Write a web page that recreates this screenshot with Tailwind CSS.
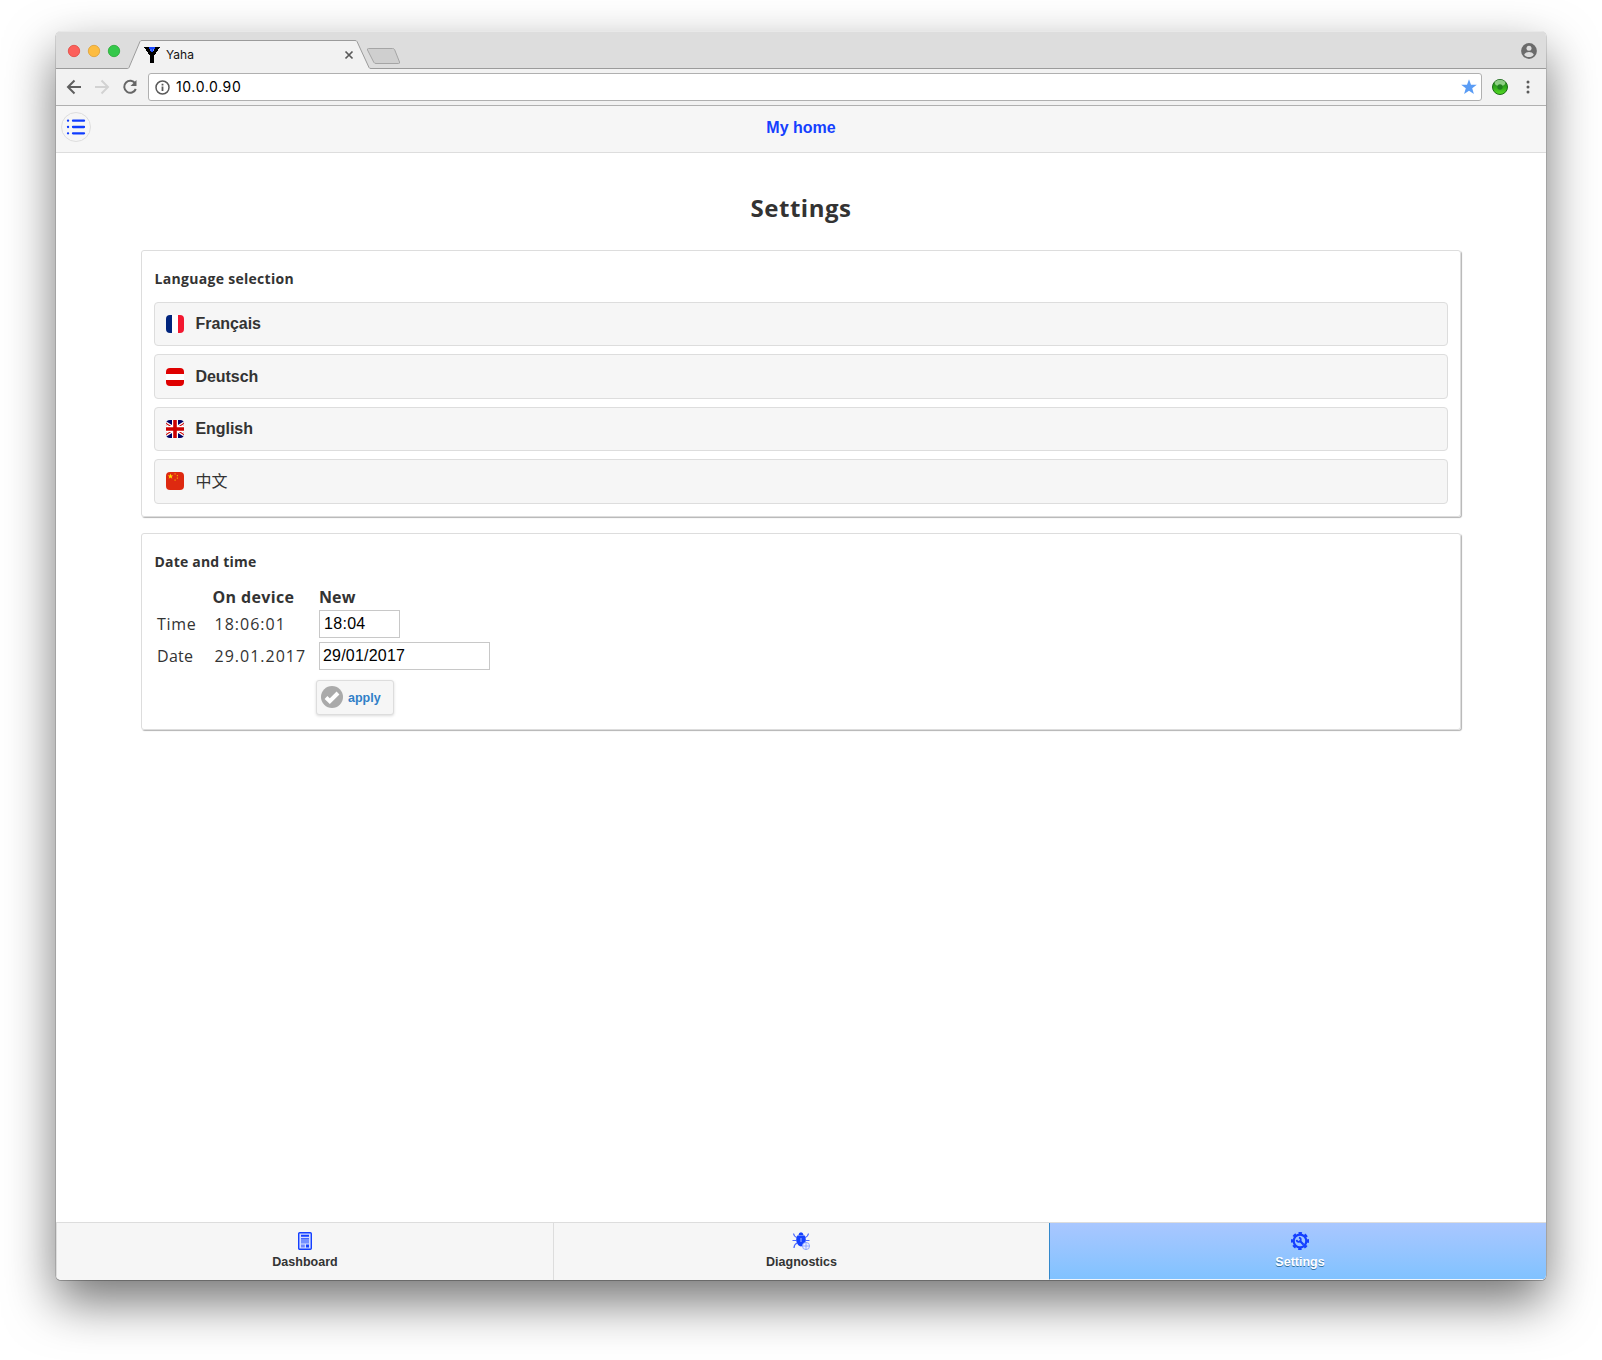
<!DOCTYPE html>
<html lang="en">
<head>
<meta charset="utf-8">
<title>Yaha</title>
<script src="https://cdn.jsdelivr.net/npm/@tailwindcss/browser@4"></script>
</head>
<body class="h-[1360px] w-[1602px] overflow-hidden bg-white pt-[31px] pl-[56px] font-['Liberation_Sans',sans-serif] text-[#333]">
<div class="flex h-[1249px] w-[1490px] flex-col overflow-hidden rounded-[5px] bg-white shadow-[0_0.5px_0_0.5px_rgba(0,0,0,0.25),0_22px_50px_rgba(0,0,0,0.55)]">

  <!-- Tab strip -->
  <div class="relative flex h-[38px] shrink-0 items-start border-t border-[#e8e8e8] bg-[#dddddd]">
    <svg class="h-[37px] w-[1490px]" viewBox="0 0 1490 37" fill="none">
      <circle cx="18" cy="19" r="5.7" fill="#fc605b" stroke="#e2463f" stroke-width=".8"/>
      <circle cx="38" cy="19" r="5.7" fill="#fdbc40" stroke="#dea034" stroke-width=".8"/>
      <circle cx="58" cy="19" r="5.7" fill="#34c84a" stroke="#27a835" stroke-width=".8"/>
      <path d="M71.5 38 84 9.5Q84.500 8.500 86 8.500H299Q300.500 8.500 301 9.500L314 38Z" fill="#f2f2f2"/>
      <path d="M0 36.500H71.500Q72.500 36.500 73 35.500L84 9.500Q84.500 8.500 86 8.500H299Q300.500 8.500 301 9.500L313 35.500Q313.500 36.500 315 36.500H1490" stroke="#9b9b9b"/>
      <path d="M312.500 16.500H336.500Q338 16.500 338.600 17.600L343.500 30Q344 31.500 342.500 31.500H320Q318.500 31.500 317.800 30.300L311.500 18Q311 16.500 312.500 16.500Z" fill="#cfcfcf" stroke="#a5a5a5"/>
      <path d="M88 15h16v1h-1v1h-1v2h-1v1h-1v2h-1v1h-1v8h-4v-8h-1v-1h-1v-2h-1v-1h-1v-2h-1v-1h-1z" fill="#000"/>
      <path d="M93 15h6v2h-1v2h-1v1h-2v-1h-1v-2h-1z" fill="#1846ff"/>
      <path d="M94.500 17.500h1v1h-1zM97 17.500h1v1h-1z" fill="#cfe0ff"/>
      <path d="m289.500 19.500 7 7m0-7-7 7" stroke="#5a5a5a" stroke-width="1.700"/>
      <circle cx="1473" cy="19" r="7.900" fill="#6b6b6b"/>
      <circle cx="1473" cy="16.200" r="2.500" fill="#ddd"/>
      <path d="M1468.200 22.700c.8-2 3-2.700 4.800-2.700s4 .7 4.800 2.700c-1 1.500-2.900 2.300-4.800 2.300s-3.800-.8-4.800-2.300z" fill="#ddd"/>
    </svg>
    <span class="absolute left-[110px] top-[15px] font-[Inter,sans-serif] text-[12px] leading-[16px] text-[#111]">Yaha</span>
  </div>

  <!-- Toolbar -->
  <div class="flex h-[37px] shrink-0 items-start border-b border-[#b0b0b0] bg-[#f2f2f2] pl-[9px] pt-[4px]">
    <svg class="h-[28px] w-[83px] shrink-0" viewBox="0 0 83 28" fill="none" stroke-width="2">
      <path d="M16 14H3.500M9.500 7.500 3 14l6.500 6.500" stroke="#5f5f5f"/>
      <path d="M30 14H42.500M36.500 7.500 43 14l-6.500 6.500" stroke="#d2d2d2"/>
      <path d="M70.300 10.500A6 6 0 1 0 70.800 16" stroke="#666"/>
      <path d="M71.500 7v6h-6z" fill="#666"/>
    </svg>
    <div class="flex h-[28px] w-[1334px] shrink-0 items-center rounded-[3px] border border-[#b0b0b0] bg-white pl-[5.500px] pr-[4px]">
      <svg class="size-[15px]" viewBox="0 0 15 15" fill="none">
        <circle cx="7.500" cy="7.500" r="6.500" stroke="#5a5a5a" stroke-width="1.500"/>
        <path d="M7.500 6.500v4.500M7.500 3.800v1.600" stroke="#5a5a5a" stroke-width="1.800"/>
      </svg>
      <span class="ml-[6.500px] font-[Inter,sans-serif] text-[14px] leading-[20px] tracking-[0.6px] text-black">10.0.0.90</span>
      <svg class="ml-auto size-[16px]" viewBox="0 0 16 16"><path d="M8 .3 10 5.700h5.800L11.200 9.300l1.700 5.700L8 11.700 3.100 15l1.700-5.700L.2 5.700H6z" fill="#5a9cf5"/></svg>
    </div>
    <svg class="h-[28px] w-[60px] shrink-0" viewBox="0 0 60 28">
      <defs><linearGradient id="orb" x2="0" y2="1"><stop offset="0" stop-color="#1f7a1c"/><stop offset=".5" stop-color="#2fa81c"/><stop offset="1" stop-color="#55dd22"/></linearGradient></defs>
      <circle cx="18" cy="14" r="7.500" fill="url(#orb)" stroke="#1c6b18"/>
      <ellipse cx="18" cy="10" rx="5.300" ry="3.300" fill="#b9e8b0" opacity=".7"/>
      <circle cx="18" cy="14" r="2.700" fill="#22801f"/>
      <g fill="#5a5a5a"><circle cx="46" cy="9" r="1.500"/><circle cx="46" cy="14" r="1.500"/><circle cx="46" cy="19" r="1.500"/></g>
    </svg>
  </div>

  <!-- Page header -->
  <header class="grid h-[47px] shrink-0 grid-cols-[1fr_auto_1fr] items-start border-b border-[#ddd] bg-[#f6f6f6] px-[5px] pt-[6px]">
    <svg class="size-[30px]" viewBox="0 0 30 30">
      <circle cx="15" cy="15" r="14.500" fill="#f6f6f6" stroke="#ddd"/>
      <g stroke="#0f3cff" stroke-width="2.300" stroke-linecap="round"><path d="M12 8.700h11M12 15h11M12 21.300h11M7 8.700h.1M7 15h.1M7 21.300h.1"/></g>
    </svg>
    <h1 class="pt-[6px] text-[16px] leading-[20px] font-bold text-[#1540ff]">My home</h1>
  </header>

  <!-- Content -->
  <main class="flex-1 bg-white px-[85px]">
    <h2 class="mt-[38px] text-center font-['Open_Sans',sans-serif] text-[24px] leading-[34px] font-bold tracking-[0.5px]">Settings</h2>

    <section class="mt-[25px] h-[267px] rounded-[3px] border border-[#ddd] px-[12px] pt-[18px] shadow-[1px_1px_1px_rgba(0,0,0,0.3)]">
      <h3 class="pl-[0.500px] font-['Open_Sans',sans-serif] text-[14px] leading-[20px] font-bold tracking-[0.3px]">Language selection</h3>
      <ul class="mt-[13px] flex flex-col gap-[8px] text-[16px] leading-[20px] font-bold">
        <li class="flex h-[44.400px] items-center gap-[11.500px] rounded-[4px] border border-[#ddd] bg-[#f6f6f6] pl-[11px]">
          <svg class="size-[18px] rounded-[4px]" viewBox="0 0 18 18"><path d="M0 0h6v18H0z" fill="#00247d"/><path d="M6 0h6v18H6z" fill="#fff"/><path d="M12 0h6v18h-6z" fill="#f31830"/></svg>
          <span class="tracking-[-0.05px]">Français</span>
        </li>
        <li class="flex h-[44.400px] items-center gap-[11.500px] rounded-[4px] border border-[#ddd] bg-[#f6f6f6] pl-[11px]">
          <svg class="mt-[1px] size-[18px] rounded-[4px]" viewBox="0 0 18 18"><path d="M0 0h18v18H0z" fill="#df0000"/><path d="M0 6h18v6H0z" fill="#fff"/></svg>
          <span class="tracking-[-0.05px]">Deutsch</span>
        </li>
        <li class="flex h-[44.400px] items-center gap-[11.500px] rounded-[4px] border border-[#ddd] bg-[#f6f6f6] pl-[11px]">
          <svg class="size-[18px] rounded-[4px]" viewBox="0 0 18 18"><path d="M0 0h18v18H0z" fill="#006"/><path d="M-3 1.500 21 16.500M21 1.500-3 16.500" stroke="#fff" stroke-width="3.600"/><path d="M-3 1.500 21 16.500M21 1.500-3 16.500" stroke="#c00" stroke-width="1.100"/><path d="M9 0v18M0 9h18" stroke="#fff" stroke-width="6"/><path d="M9 0v18M0 9h18" stroke="#c00" stroke-width="3.600"/></svg>
          <span class="tracking-[-0.05px]">English</span>
        </li>
        <li class="flex h-[44.400px] items-center gap-[11.500px] rounded-[4px] border border-[#ddd] bg-[#f6f6f6] pl-[11px]">
          <svg class="size-[18px] rounded-[4px]" viewBox="0 0 18 18"><path d="M0 0h18v18H0z" fill="#de2910"/><path d="m4.500 1.500.7 2h2.100L5.600 4.700l.7 2-1.800-1.200-1.800 1.200.7-2L1.700 3.500h2.100z" fill="#ffde00"/><path d="M8.500 1.200h1.200v1.200H8.500zM10.800 3h1.200v1.200h-1.200zM10.800 5.500h1.200v1.200h-1.200zM8.500 7.500h1.200v1.200H8.500z" fill="#f5a000"/></svg>
          <span class="pb-[3px] font-['Noto_Sans_CJK_SC',sans-serif] font-normal">中文</span>
        </li>
      </ul>
    </section>

    <section class="mt-[16px] h-[197px] rounded-[3px] border border-[#ddd] px-[12px] pt-[18px] shadow-[1px_1px_1px_rgba(0,0,0,0.3)]">
      <h3 class="pl-[0.500px] font-['Open_Sans',sans-serif] text-[14px] leading-[20px] font-bold tracking-[0.2px]">Date and time</h3>
      <div class="mt-[14px] grid grid-cols-[59px_106px_auto] grid-rows-[24px_32px_32px] items-center font-['Open_Sans',sans-serif] text-[16px] leading-[20px]">
        <span></span>
        <b class="-ml-[0.500px] pb-[3px] tracking-[0.35px]">On device</b>
        <b class="pb-[3px] tracking-[0.1px]">New</b>
        <span class="pb-[4px] pl-[3px] tracking-[0.7px]">Time</span>
        <span class="pb-[4px] pl-[1.500px] tracking-[1px]">18:06:01</span>
        <div class="flex h-[28px] w-[81px] items-center self-start border border-[#c8c8c8] bg-white pl-[4px] font-['Liberation_Sans',sans-serif] tracking-[0.3px] text-black">18:04</div>
        <span class="pb-[4px] pl-[3px] tracking-[0.3px]">Date</span>
        <span class="pb-[4px] pl-[1.500px] tracking-[1px]">29.01.2017</span>
        <div class="flex h-[28px] w-[171px] items-center self-start border border-[#c8c8c8] bg-white pl-[3px] font-['Liberation_Sans',sans-serif] tracking-[0.2px] text-black">29/01/2017</div>
      </div>
      <button class="mt-[6px] ml-[162px] flex h-[35px] w-[78px] items-center gap-[5px] rounded-[3px] border border-[#ddd] bg-[#f6f6f6] pl-[4px] shadow-[0_1px_3px_rgba(0,0,0,0.15)]">
        <svg class="-mt-[1px] size-[22px]" viewBox="0 0 22 22"><circle cx="11" cy="11" r="11" fill="#aaa"/><path d="m5 11.500 3.800 3.700L17 7" fill="none" stroke="#fff" stroke-width="4"/></svg>
        <span class="text-[12.500px] leading-[16px] font-bold text-[#3080c8]">apply</span>
      </button>
    </section>
  </main>

  <!-- Bottom navigation -->
  <nav class="flex h-[58px] shrink-0 border-t border-[#ddd] bg-[#f6f6f6] text-[12.500px] leading-[16px] font-bold">
    <div class="flex w-[498px] flex-col items-center gap-[4px] border-x border-[#ddd] pt-[9px]">
      <svg class="size-[18px]" viewBox="0 0 18 18"><rect x="2.700" y=".7" width="12.600" height="16.600" rx="1" fill="#d5deff" stroke="#1540ff" stroke-width="1.400"/><path d="M5 2.800h8v2H5zM5 6.300h8v1.200H5zM5 8.400h8v1.200H5zM5 10.500h8v.8H5zM10 12.500h3v3h-3z" fill="#1540ff"/><path d="M5 12.500h3.800v3H5z" fill="#6f88ff"/></svg>
      <span>Dashboard</span>
    </div>
    <div class="flex w-[495px] flex-col items-center gap-[4px] pt-[9px]">
      <svg class="mr-[1px] size-[18px]" viewBox="0 0 18 18" fill="none"><path d="M5 5.500Q2 4.500 1.500 1.500M13 5.500Q16 4.500 16.500 1.500M4.500 8.500H.5M13.500 8.500h4M5 11Q2 12.500 2 16" stroke="#4a68ff" stroke-width="1.200"/><path d="M6.300 3.200Q7 .3 9 .3t2.700 2.900z" fill="#1540ff"/><path d="M5.300 3.500h7.400Q14.500 7 13.500 10 12 14 9 14.500 6 14 4.500 10 3.500 7 5.300 3.500z" fill="#1540ff"/><path d="M9 6v4" stroke="#9db2ff"/><circle cx="14" cy="14" r="3.600" fill="#eef1ff" stroke="#7f9aff" stroke-width=".8"/><path d="M14 10.500v7M10.500 14h7" stroke="#7f9aff" stroke-width=".8"/></svg>
      <span>Diagnostics</span>
    </div>
    <div class="flex flex-1 flex-col items-center gap-[4px] border-b border-l border-b-[#f0f5fc] border-l-[#3388cc] bg-linear-to-b from-[#a9c7ff] to-[#80c2ff] pt-[9px] pl-[4px] text-white [text-shadow:0_1px_0_#3373a5]">
      <svg class="size-[18px]" viewBox="0 0 18 18" fill="none"><circle cx="9" cy="9" r="7.900" stroke="#1540ff" stroke-width="2.200" stroke-dasharray="3.400 2.804" transform="rotate(-12.300 9 9)"/><circle cx="9" cy="9" r="6.300" stroke="#1540ff" stroke-width="2.200"/><path d="m8.500 8.500 4.200 4.200" stroke="#1540ff" stroke-width="2.300"/><path d="M7.900 5.600A2.100 2.100 0 1 1 5.600 7.900" stroke="#1540ff" stroke-width="1.700"/></svg>
      <span>Settings</span>
    </div>
  </nav>
</div>
</body>
</html>
